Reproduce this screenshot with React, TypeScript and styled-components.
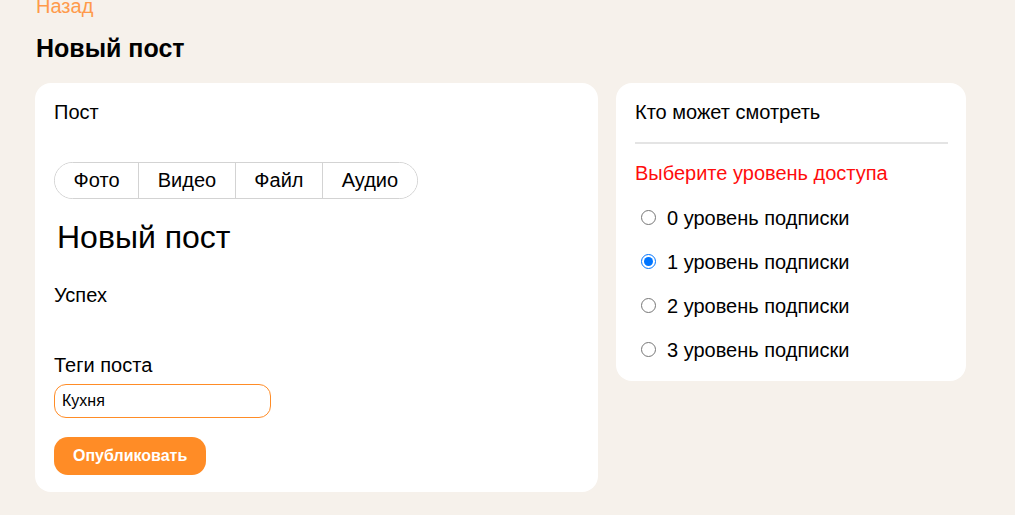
import React, { useState } from "react";
import styled, { createGlobalStyle } from "styled-components";

const Global = createGlobalStyle`
  html, body { margin: 0; padding: 0; background: #f6f1eb; }
  body { font-family: "Liberation Sans", Arial, sans-serif; color: #000; overflow: hidden; }
`;

const Page = styled.div`
  padding: 0 36px;
  display: flex;
  flex-direction: column;
`;

const Back = styled.a`
  display: block;
  margin-top: -5px;
  font-size: 20px;
  line-height: 23px;
  color: #ff9a4a;
  text-decoration: none;
`;

const Title = styled.h1`
  margin: 16px 0 0;
  font-size: 25px;
  line-height: 29px;
  font-weight: 700;
`;

const Columns = styled.div`
  display: flex;
  align-items: flex-start;
  gap: 18px;
  margin-top: 20px;
  margin-left: -1px;
`;

const Card = styled.section<{ $w: number }>`
  width: ${(p) => p.$w}px;
  box-sizing: border-box;
  background: #fff;
  border-radius: 16px;
  padding: 18px 18px 17px 19px;
  display: flex;
  flex-direction: column;
  align-items: flex-start;
`;

const Label = styled.div<{ $mt?: number }>`
  font-size: 20px;
  line-height: 23px;
  margin-top: ${(p) => p.$mt ?? 0}px;
`;

const Tabs = styled.div`
  display: flex;
  margin-top: 38px;
  border: 1px solid #d3d3d3;
  border-radius: 19px;
  overflow: hidden;
`;

const Tab = styled.button`
  font-family: inherit;
  font-size: 20px;
  line-height: 23px;
  padding: 6px 18.6px;
  background: #fff;
  border: none;
  color: #000;
  & + & { border-left: 1px solid #d3d3d3; }
`;

const BigTitle = styled.div`
  font-size: 32px;
  line-height: 37px;
  margin-top: 20px;
  padding-left: 3px;
`;

const TagInput = styled.input`
  margin-top: 7px;
  width: 217px;
  height: 34px;
  box-sizing: border-box;
  border: 1px solid #ff8c26;
  border-radius: 12px;
  padding: 0 7px;
  font-family: inherit;
  font-size: 16px;
  color: #000;
  outline: none;
`;

const Publish = styled.button`
  margin-top: 19px;
  height: 38px;
  padding: 0 19px;
  border: none;
  border-radius: 14px;
  background: #ff8c26;
  color: #fff;
  font-family: inherit;
  font-weight: 700;
  font-size: 16px;
`;

const Divider = styled.hr`
  align-self: stretch;
  margin: 18px 0 0;
  border: none;
  height: 2px;
  background: #e4e4e4;
`;

const Warn = styled.div`
  color: #ff0d0d;
  font-size: 20px;
  line-height: 23px;
  margin-top: 18px;
`;

const RadioList = styled.div`
  display: flex;
  flex-direction: column;
  margin-top: 11px;
  margin-bottom: -8px;
`;

const RadioRow = styled.label`
  display: flex;
  align-items: center;
  height: 44px;
  font-size: 20px;
  line-height: 23px;
`;

const Radio = styled.input`
  margin: -1px 11px 0 6px;
  width: 15px;
  height: 15px;
`;

export default function App() {
  const [level, setLevel] = useState(1);
  return (
    <>
      <Global />
      <Page>
        <Back href="#">Назад</Back>
        <Title>Новый пост</Title>
        <Columns>
          <Card $w={563}>
            <Label>Пост</Label>
            <Tabs>
              {["Фото", "Видео", "Файл", "Аудио"].map((t) => (
                <Tab key={t}>{t}</Tab>
              ))}
            </Tabs>
            <BigTitle>Новый пост</BigTitle>
            <Label $mt={28}>Успех</Label>
            <Label $mt={47}>Теги поста</Label>
            <TagInput defaultValue="Кухня" />
            <Publish>Опубликовать</Publish>
          </Card>
          <Card $w={350}>
            <Label>Кто может смотреть</Label>
            <Divider />
            <Warn>Выберите уровень доступа</Warn>
            <RadioList>
              {[0, 1, 2, 3].map((n) => (
                <RadioRow key={n}>
                  <Radio
                    type="radio"
                    name="level"
                    checked={level === n}
                    onChange={() => setLevel(n)}
                  />
                  {n} уровень подписки
                </RadioRow>
              ))}
            </RadioList>
          </Card>
        </Columns>
      </Page>
    </>
  );
}
